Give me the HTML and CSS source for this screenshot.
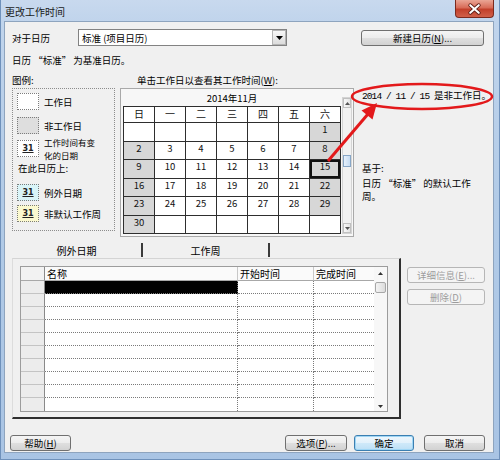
FILE: index.html
```html
<!DOCTYPE html>
<html lang="zh-CN">
<head>
<meta charset="utf-8">
<title>更改工作时间</title>
<link rel="stylesheet" href="styles.css">
</head>
<body>
<div class="window">
  <div class="titlebar">
    <span class="title">更改工作时间</span>
    <div class="close">
      <svg width="39" height="18" viewBox="0 0 39 18">
        <path d="M15 5 L24 13 M24 5 L15 13" stroke="#5a1a12" stroke-width="4" stroke-linecap="round"/>
        <path d="M15 5 L24 13 M24 5 L15 13" stroke="#ffffff" stroke-width="2.2" stroke-linecap="round"/>
      </svg>
    </div>
  </div>
  <div class="client">
    <div class="row1">
      <span class="lbl-for">对于日历</span>
      <div class="select">
        <span class="sel-text">标准 (项目日历)</span>
        <div class="drop"><svg width="7" height="4" viewBox="0 0 7 4"><path d="M0 0 H7 L3.5 4 Z" fill="#000"/></svg></div>
      </div>
      <div class="btn btn-new">新建日历(<u>N</u>)...</div>
    </div>
    <div class="base-line">日历 “标准” 为基准日历。</div>
    <div class="main">
      <div class="legend-col">
        <div class="cap">图例:</div>
        <div class="legend">
          <div class="li"><span class="sw"></span><span>工作日</span></div>
          <div class="li li2"><span class="sw sw-gray"></span><span>非工作日</span></div>
          <div class="li li3"><span class="sw">31</span><span class="two">工作时间有变<br>化的日期</span></div>
          <div class="sub">在此日历上:</div>
          <div class="li li4"><span class="sw sw-cyan">31</span><span>例外日期</span></div>
          <div class="li li5"><span class="sw sw-yellow">31</span><span>非默认工作周</span></div>
        </div>
      </div>
      <div class="cal-col">
        <div class="cap cap-cal">单击工作日以查看其工作时间(<u>W</u>):</div>
        <div class="calbox">
          <div class="cal">
            <div class="month">2014年11月</div>
            <div class="grid">
              <div class="h">日</div><div class="h">一</div><div class="h">二</div><div class="h">三</div><div class="h">四</div><div class="h">五</div><div class="h">六</div>
              <div></div><div></div><div></div><div></div><div></div><div></div><div class="we">1</div>
              <div class="we">2</div><div>3</div><div>4</div><div>5</div><div>6</div><div>7</div><div class="we">8</div>
              <div class="we">9</div><div>10</div><div>11</div><div>12</div><div>13</div><div>14</div><div class="we sel">15</div>
              <div class="we">16</div><div>17</div><div>18</div><div>19</div><div>20</div><div>21</div><div class="we">22</div>
              <div class="we">23</div><div>24</div><div>25</div><div>26</div><div>27</div><div>28</div><div class="we">29</div>
              <div class="we">30</div><div></div><div></div><div></div><div></div><div></div><div></div>
            </div>
          </div>
          <div class="vscroll">
            <div class="sb-btn"><svg width="5" height="3" viewBox="0 0 5 3"><path d="M0 3 H5 L2.5 0 Z" fill="#555"/></svg></div>
            <div class="thumb"></div>
            <div class="sb-btn down"><svg width="5" height="3" viewBox="0 0 5 3"><path d="M0 0 H5 L2.5 3 Z" fill="#555"/></svg></div>
          </div>
        </div>
      </div>
      <div class="info-col">
        <div class="status"><span class="mono">2014 / 11 / 15 </span>是非工作日。</div>
        <div class="based">基于:</div>
        <div class="based-text">日历 “标准” 的默认工作<br>周。</div>
      </div>
    </div>
    <div class="tabs">
      <div class="tab tab1">例外日期</div>
      <div class="tab tab2">工作周</div>
    </div>
    <div class="lower">
      <div class="panel">
        <div class="table">
          <div class="tg">
            <div class="rh rh0"></div><div class="th">名称</div><div class="th">开始时间</div><div class="th th-last">完成时间</div>
            <div class="rh"></div><div class="td black"></div><div class="td"></div><div class="td last"></div>
            <div class="rh"></div><div class="td"></div><div class="td"></div><div class="td last"></div>
            <div class="rh"></div><div class="td"></div><div class="td"></div><div class="td last"></div>
            <div class="rh"></div><div class="td"></div><div class="td"></div><div class="td last"></div>
            <div class="rh"></div><div class="td"></div><div class="td"></div><div class="td last"></div>
            <div class="rh"></div><div class="td"></div><div class="td"></div><div class="td last"></div>
            <div class="rh"></div><div class="td"></div><div class="td"></div><div class="td last"></div>
            <div class="rh"></div><div class="td"></div><div class="td"></div><div class="td last"></div>
            <div class="rh"></div><div class="td"></div><div class="td"></div><div class="td last"></div>
            <div class="rh rh-end"></div><div class="td end"></div><div class="td end"></div><div class="td last end"></div>
          </div>
          <div class="tsb">
            <div class="tsb-up"><svg width="5" height="3" viewBox="0 0 5 3"><path d="M0 3 H5 L2.5 0 Z" fill="#333"/></svg></div>
            <div class="tsb-thumb"></div>
            <div class="tsb-down"><svg width="5" height="3" viewBox="0 0 5 3"><path d="M0 0 H5 L2.5 3 Z" fill="#333"/></svg></div>
          </div>
        </div>
      </div>
      <div class="side-btns">
        <div class="btn btn-dis">详细信息(<u>E</u>)...</div>
        <div class="btn btn-dis">删除(<u>D</u>)</div>
      </div>
    </div>
    <div class="footer">
      <div class="btn btn-help">帮助(<u>H</u>)</div>
      <div class="btn btn-opt">选项(<u>P</u>)...</div>
      <div class="btn btn-ok">确定</div>
      <div class="btn btn-cancel">取消</div>
    </div>
  </div>
  <svg class="annot" width="500" height="460" viewBox="0 0 500 460">
    <ellipse cx="422" cy="96.5" rx="70" ry="12.5" fill="none" stroke="#e3191b" stroke-width="2.5"/>
    <line x1="328" y1="161" x2="368" y2="114" stroke="#e3191b" stroke-width="3"/>
    <polygon points="377,103 372.5,119.5 361.5,110.5" fill="#e3191b"/>
  </svg>
</div>
</body>
</html>
```
FILE: styles.css
```css
* { box-sizing: border-box; margin: 0; padding: 0; }
html, body { width: 500px; height: 460px; overflow: hidden; }
body {
  font-family: "Noto Sans CJK SC", "Noto Sans", sans-serif;
  font-size: 9.5px;
  color: #000;
  background: #b9cfe8;
}
u { text-decoration: underline; }

.window {
  position: relative;
  width: 500px;
  height: 460px;
  background: linear-gradient(180deg, #c8d9ee 0, #c0d4ec 22px, #b2cbe7 200px, #a9c4e4 100%);
  box-shadow: inset 1px 0 0 #6f91bb, inset -1px 0 0 #6f91bb, inset 0 -1px 0 #6f91bb;
}

.titlebar { height: 22px; display: flex; align-items: flex-start; }
.title { margin: 5px 0 0 5px; line-height: 14px; font-size: 10px; color: #1a1a1a; }
.close {
  margin-left: auto;
  margin-right: 6px;
  width: 39px;
  height: 18px;
  border: 1px solid #7b2a1e;
  border-top: none;
  border-radius: 0 0 4px 4px;
  background: linear-gradient(180deg, #eaa595 0, #d86c58 45%, #c2402b 55%, #d0604a 100%);
  display: flex;
  align-items: center;
  justify-content: center;
}
.close svg { display: block; }

.client {
  margin-left: 5px;
  width: 488px;
  height: 430px;
  background: #f0f0f0;
  box-shadow: 0 0 0 1px #8ea4be;
  display: flex;
  flex-direction: column;
}

.row1 { display: flex; align-items: center; margin-top: 7px; height: 17px; }
.lbl-for { margin-left: 7px; width: 66px; }
.select {
  width: 209px;
  height: 17px;
  border: 1px solid #828282;
  background: #fff;
  display: flex;
  align-items: center;
  padding-left: 3px;
}
.sel-text { flex: 1; }
.drop {
  width: 14px;
  height: 15px;
  border: 1px solid #b4b4b4;
  background: linear-gradient(180deg, #f7f7f7, #dcdcdc);
  display: flex;
  align-items: center;
  justify-content: center;
}

.btn {
  display: flex;
  align-items: center;
  justify-content: center;
  height: 16px;
  border: 1px solid #707070;
  border-radius: 3px;
  background: linear-gradient(180deg, #f5f5f5 0, #ececec 50%, #dfdfdf 51%, #d2d2d2 100%);
  line-height: 14px;
  white-space: nowrap;
}
.btn-new { margin-left: auto; margin-right: 9px; width: 123px; }

.base-line { margin: 7px 0 0 7px; height: 14px; line-height: 14px; }

.main { display: flex; margin-top: 6px; height: 164px; }
.cap { height: 15px; line-height: 15px; }

.legend-col { margin-left: 7px; width: 103px; }
.legend {
  height: 143px;
  border: 1px dotted #8c8c8c;
  padding: 4px 0 0 4px;
}
.li { display: flex; align-items: center; gap: 5px; height: 17px; }
.li2 { margin-top: 7px; }
.li3 { margin-top: 6px; }
.li4 { margin-top: 9px; }
.li5 { margin-top: 4px; }
.sw {
  width: 22px;
  height: 17px;
  flex: none;
  border: 1px dotted #7c7c7c;
  background: #fff;
  display: flex;
  align-items: center;
  justify-content: center;
  font-family: "DejaVu Sans", sans-serif;
  font-size: 8px;
  font-weight: bold;
  color: #222;
  text-decoration: underline;
}
.sw-gray { background: #dedede; }
.sw-cyan { background: #d9f4f8; }
.sw-yellow { background: #fbf9cf; }
.two { line-height: 12.5px; font-size: 8.5px; }
.sub { height: 14px; line-height: 14px; margin: 4px 0 0 1px; }

.cal-col { margin-left: 5px; width: 234px; }
.cap-cal { padding-left: 17px; }
.calbox {
  height: 149px;
  border: 1px solid #a9a9a9;
  background: #f7f7f7;
  display: flex;
  gap: 1px;
  padding: 1px 1px 2px 2px;
}
.cal { width: 218px; display: flex; flex-direction: column; }
.month { height: 16px; line-height: 16px; text-align: center; }
.grid {
  display: grid;
  grid-template-columns: repeat(7, 30px);
  grid-template-rows: 15px 18px 17px 18px 17px 18px 17px;
  gap: 1px;
  padding: 1px;
  height: 128px;
  background: #2e2e2e;
}
.grid > div {
  background: #fff;
  text-align: center;
  line-height: 11px;
  padding-top: 1px;
  font-size: 9.5px;
  color: #111;
}
.grid > .h { line-height: 14px; padding-top: 0; font-size: 10px; }
.grid > .we { background: #d7d7d7; }
.grid > .sel { box-shadow: inset 0 0 0 2px #111; }

.vscroll {
  width: 11px;
  margin-top: 7px;
  height: 137px;
  display: flex;
  flex-direction: column;
  background: #f1f1f1;
  border: 1px solid #d4d4d4;
}
.sb-btn {
  height: 10px;
  border: 1px solid #c0c0c0;
  background: linear-gradient(90deg, #f8f8f8, #e4e4e4);
  display: flex;
  align-items: center;
  justify-content: center;
}
.sb-btn.down { margin-top: auto; }
.thumb {
  margin-top: 47px;
  height: 12px;
  border: 1px solid #87a6c6;
  background: linear-gradient(90deg, #e6f0fb, #c5dbf2);
}

.info-col { margin-left: 8px; display: flex; flex-direction: column; }
.status { margin-top: 15px; height: 14px; line-height: 14px; white-space: nowrap; }
.mono {
  font-family: "Liberation Mono", monospace;
  font-size: 9.5px;
  letter-spacing: -0.9px;
  white-space: pre;
}
.based { margin-top: 59px; height: 14px; line-height: 14px; }
.based-text { margin-top: 2px; line-height: 13px; }

.tabs { display: flex; margin: 4px 0 0 7px; height: 17px; }
.tab {
  height: 14px;
  margin-top: 2px;
  display: flex;
  align-items: center;
  justify-content: center;
  border-right: 2px solid #3a3a3a;
  font-size: 10px;
}
.tab1 { width: 131px; }
.tab2 { width: 127px; }

.lower { display: flex; height: 161px; }
.panel {
  margin-left: 7px;
  width: 389px;
  height: 161px;
  border-top: 1px solid #d4d4d4;
  border-left: 1px solid #dcdcdc;
  border-right: 2px solid #2f2f2f;
  border-bottom: 2px solid #2f2f2f;
  padding: 7px 0 0 7px;
}
.table {
  display: flex;
  width: 368px;
  height: 146px;
  border: 1px solid #9c9c9c;
  background: #fff;
}
.tg {
  display: grid;
  grid-template-columns: 24px 193px 76px 60px;
  grid-template-rows: 14px repeat(10, 13px);
}
.rh {
  background: #ececec;
  border-right: 1px solid #8a8a8a;
  border-bottom: 1px solid #c4c4c4;
}
.rh0 { background: #f2f2f2; border-bottom-color: #a8a8a8; }
.th {
  background: #fafafa;
  border-right: 1px solid #c8c8c8;
  border-bottom: 1px solid #a8a8a8;
  padding-left: 2px;
  line-height: 13px;
  font-size: 10px;
  white-space: nowrap;
}
.th-last { border-right: none; }
.td {
  border-right: 1px dotted #7a7a7a;
  border-bottom: 1px dotted #7a7a7a;
}
.td.last { border-right: none; }
.td.black { background: #000; }
.td.end, .rh-end { border-bottom: none; }

.tsb {
  width: 13px;
  display: flex;
  flex-direction: column;
  align-items: center;
  background: #f7f7f7;
}
.tsb-up { height: 12px; display: flex; align-items: center; justify-content: center; }
.tsb-thumb {
  margin-top: 3px;
  width: 11px;
  height: 11px;
  border: 1px solid #a7a7a7;
  border-radius: 2px;
  background: linear-gradient(90deg, #f4f4f4, #dcdcdc);
}
.tsb-down { margin-top: auto; height: 10px; display: flex; align-items: center; justify-content: center; }

.side-btns { margin: 9px 0 0 6px; display: flex; flex-direction: column; gap: 6px; }
.btn-dis {
  width: 78px;
  color: #9c9c9c;
  border-color: #b6b6b6;
  background: #f4f4f4;
}

.footer { display: flex; margin-top: 16px; height: 16px; }
.btn-help { margin-left: 5px; width: 61px; }
.btn-opt { margin-left: auto; width: 62px; }
.btn-ok {
  margin-left: 7px;
  width: 60px;
  border-color: #3c7fb1;
  box-shadow: inset 0 0 0 1px #9fd6f5;
  background: linear-gradient(180deg, #eef7fd 0, #e2f1fb 50%, #cfe9f9 51%, #bde0f6 100%);
}
.btn-cancel { margin-left: 10px; margin-right: 8px; width: 61px; }

.annot { position: absolute; left: 0; top: 0; pointer-events: none; }
```
